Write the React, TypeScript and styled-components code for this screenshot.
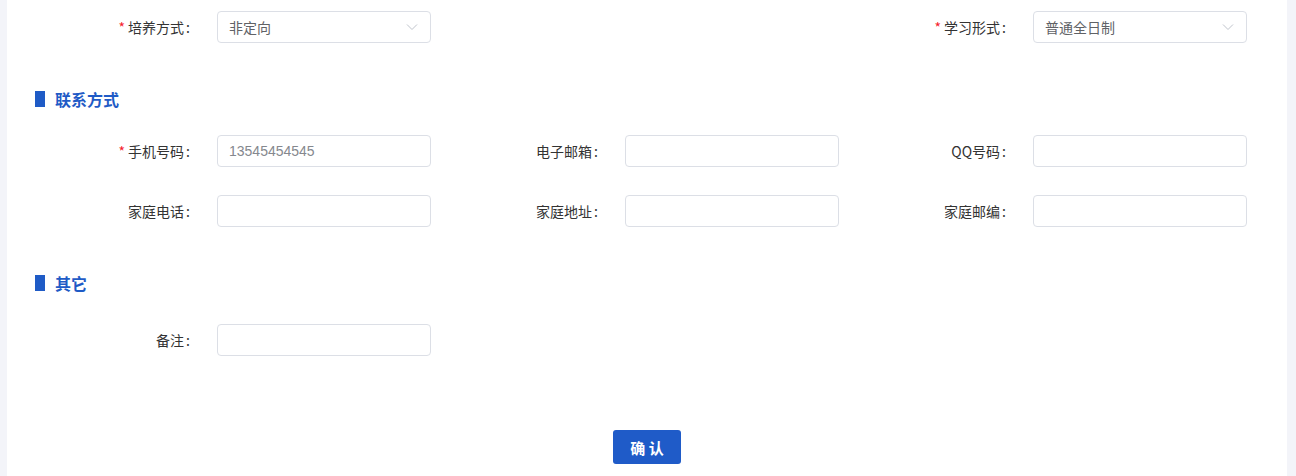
import React, { FC } from 'react'
import styled, { createGlobalStyle } from 'styled-components'

const GlobalStyle = createGlobalStyle`
  html, body {
    margin: 0;
    padding: 0;
    background: #f3f4f9;
    font-family: "Liberation Sans", "Noto Sans CJK SC", sans-serif;
  }
`

const Page = styled.div`
  padding: 0 9px 0 7px;
  min-height: 476px;
  box-sizing: border-box;
`

const Panel = styled.div`
  background: #fff;
  min-height: 476px;
  padding: 11px 0 12px 20px;
  box-sizing: border-box;
`

const SectionTitle = styled.div<{ $top: number; $bottom: number }>`
  display: flex;
  align-items: center;
  height: 22px;
  margin: ${(p) => p.$top}px 0 ${(p) => p.$bottom}px 8px;
  color: #1f5bc6;
  font-size: 16px;
  font-weight: bold;
  font-family: "Noto Sans CJK SC", sans-serif;

  &::before {
    content: '';
    display: block;
    width: 10px;
    height: 16px;
    background: #1f5bc6;
    margin-right: 10px;
  }
`

const Grid = styled.div`
  display: grid;
  grid-template-columns: repeat(3, 408px);
`

const Item = styled.div<{ $col?: number }>`
  display: flex;
  align-items: center;
  height: 32px;
  margin-bottom: 28px;
  grid-column: ${(p) => p.$col ?? 'auto'};
`

const Label = styled.label`
  width: 190px;
  box-sizing: border-box;
  padding-right: 27px;
  text-align: right;
  font-size: 14px;
  color: #333;
  font-family: "Noto Sans CJK SC", sans-serif;
  white-space: nowrap;
`

const Star = styled.span`
  color: #f5222d;
  margin-right: 3px;
`

const Colon = styled.span`
  margin-left: 2px;
`

const Input = styled.input`
  width: 214px;
  height: 32px;
  box-sizing: border-box;
  border: 1px solid #dcdfe6;
  border-radius: 4px;
  padding: 0 11px;
  font-size: 14px;
  color: #85888e;
  font-family: "Liberation Sans", "Noto Sans CJK SC", sans-serif;
  outline: none;
  background: #fff;
`

const Select = styled.div`
  width: 214px;
  height: 32px;
  box-sizing: border-box;
  border: 1px solid #dcdfe6;
  border-radius: 4px;
  padding: 0 12px 0 11px;
  display: flex;
  align-items: center;
  justify-content: space-between;
  font-size: 14px;
  color: #606266;
  font-family: "Noto Sans CJK SC", sans-serif;
  background: #fff;
`

const Footer = styled.div`
  display: flex;
  justify-content: center;
  margin: 46px 20px 0 0;
`

const Button = styled.button`
  width: 68px;
  height: 34px;
  border: none;
  border-radius: 3px;
  background: #1f5bc8;
  color: #fff;
  font-size: 15px;
  font-weight: bold;
  font-family: "Noto Sans CJK SC", sans-serif;
  cursor: pointer;
`

const Chevron = () => (
  <svg width="12" height="8" viewBox="0 0 12 8">
    <polyline points="1,1.5 6,6.5 11,1.5" fill="none" stroke="#c0c4cc" strokeWidth="1" />
  </svg>
)

type FieldProps = {
  label: string
  required?: boolean
  col?: number
  value?: string
  select?: boolean
}

const Field: FC<FieldProps> = ({ label, required, col, value = '', select }) => (
  <Item $col={col}>
    <Label>
      {required && <Star>*</Star>}
      {label}
      <Colon>:</Colon>
    </Label>
    {select ? (
      <Select>
        <span>{value}</span>
        <Chevron />
      </Select>
    ) : (
      <Input value={value} readOnly />
    )}
  </Item>
)

export default function App() {
  return (
    <>
      <GlobalStyle />
      <Page>
        <Panel>
          <Grid>
            <Field label="培养方式" required select value="非定向" col={1} />
            <Field label="学习形式" required select value="普通全日制" col={3} />
          </Grid>

          <SectionTitle $top={17} $bottom={25}>联系方式</SectionTitle>
          <Grid>
            <Field label="手机号码" required value="13545454545" />
            <Field label="电子邮箱" />
            <Field label="QQ号码" />
            <Field label="家庭电话" />
            <Field label="家庭地址" />
            <Field label="家庭邮编" />
          </Grid>

          <SectionTitle $top={17} $bottom={30}>其它</SectionTitle>
          <Grid>
            <Field label="备注" />
          </Grid>

          <Footer>
            <Button>确 认</Button>
          </Footer>
        </Panel>
      </Page>
    </>
  )
}
